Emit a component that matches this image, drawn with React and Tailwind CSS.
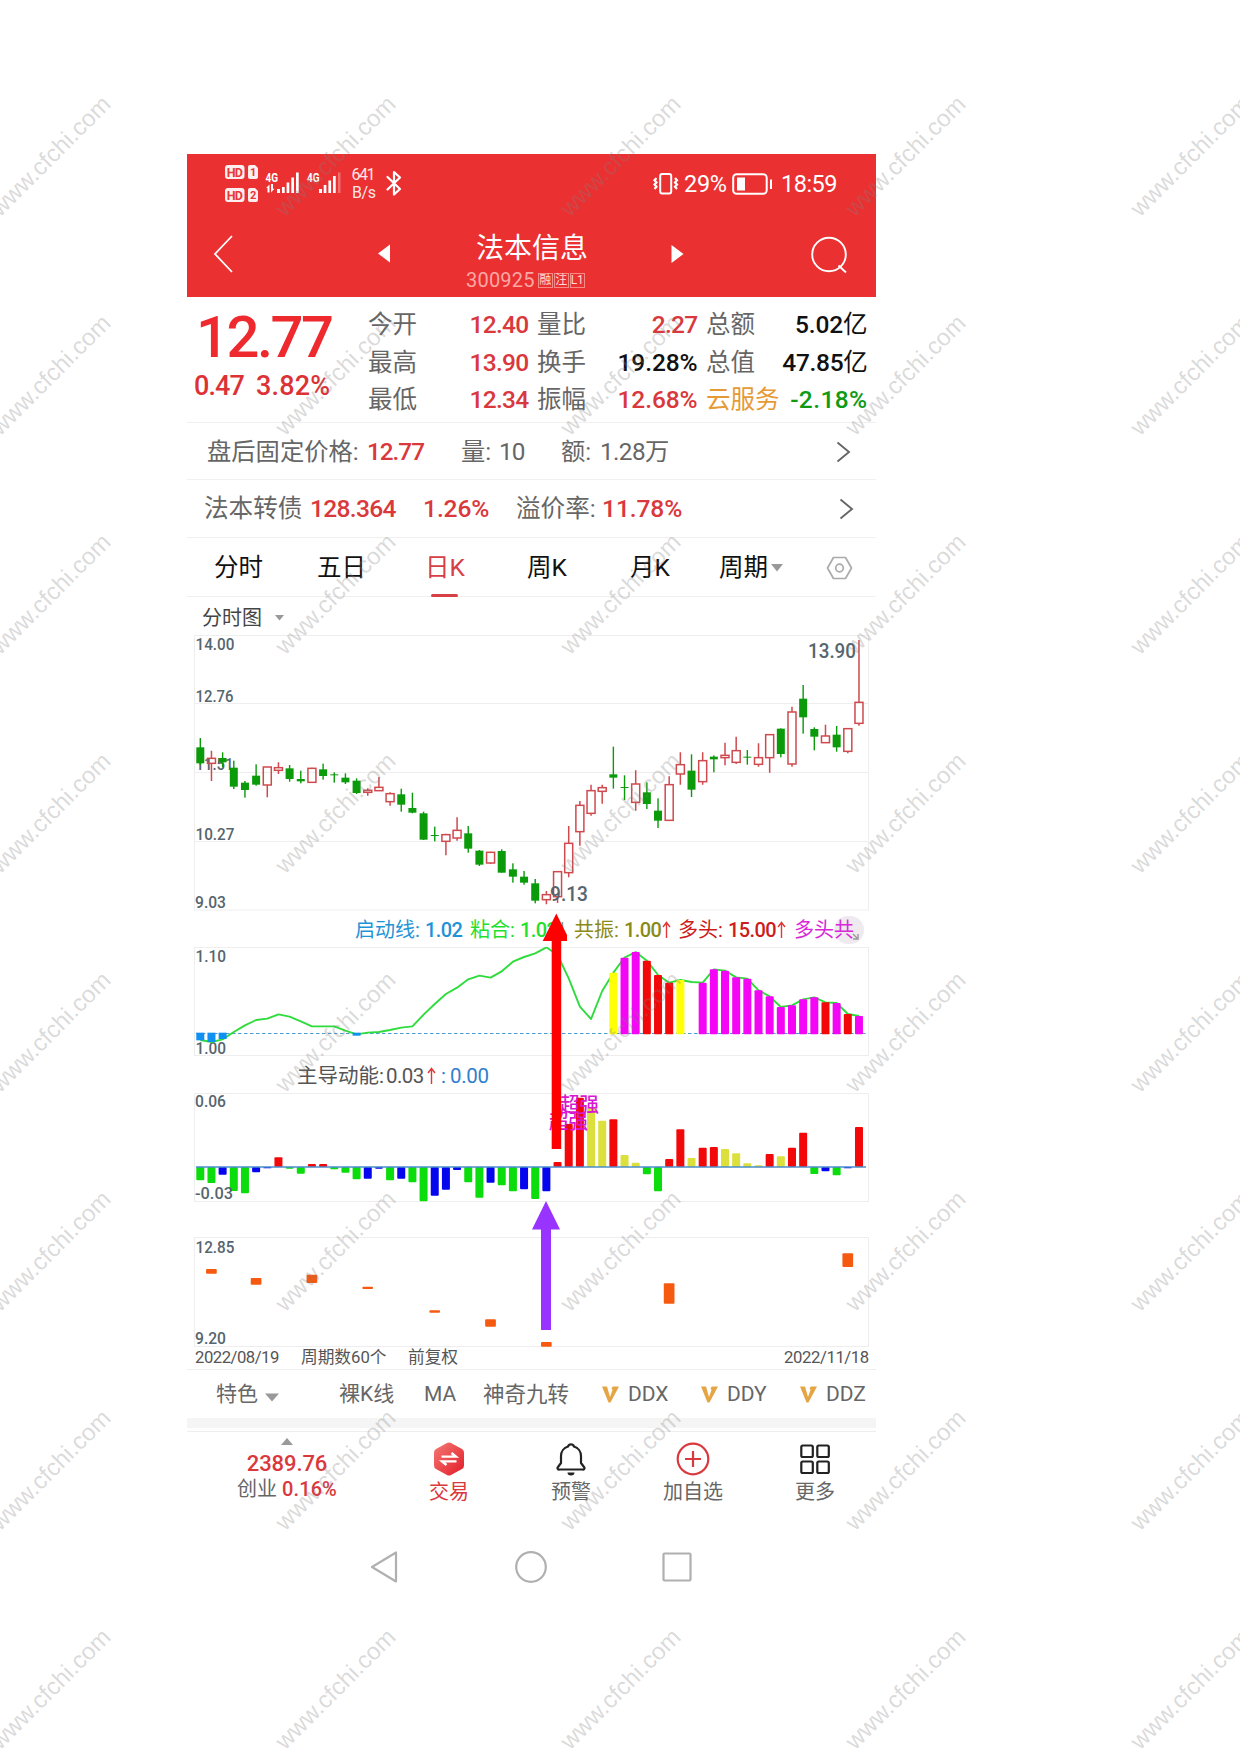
import React from "react";

const G = "#0a9a0a";
const R = "#cf4a4e";

/* [direction, high, body top, body bottom, low] in thirds of a pixel */
const CANDLES = [
  ["g", 624, 652, 700, 705], ["r", 662, 685, 700, 753], ["g", 667, 684, 697, 712], ["g", 692, 713, 770, 777],
  ["g", 753, 758, 780, 803], ["g", 703, 737, 764, 767], ["r", 710, 711, 765, 802], ["r", 697, 713, 721, 732],
  ["g", 705, 715, 747, 755], ["g", 722, 747, 754, 760], ["r", 713, 715, 757, 758], ["g", 701, 718, 738, 749],
  ["g", 727, 733, 736, 758], ["g", 730, 743, 757, 762], ["g", 745, 752, 789, 792], ["r", 775, 781, 787, 797],
  ["r", 741, 772, 782, 782], ["r", 787, 791, 815, 827], ["g", 776, 793, 824, 845], ["g", 788, 834, 848, 850],
  ["g", 845, 850, 929, 930], ["g", 890, 915, 918, 934], ["r", 911, 914, 934, 976], ["r", 862, 901, 924, 932],
  ["g", 888, 910, 956, 968], ["g", 960, 962, 1004, 1008], ["r", 965, 967, 999, 1002], ["g", 958, 963, 1028, 1028],
  ["g", 1000, 1018, 1040, 1058], ["g", 1023, 1040, 1058, 1064], ["g", 1047, 1060, 1112, 1120], ["r", 1083, 1094, 1109, 1123],
  ["r", 1024, 1025, 1100, 1119], ["r", 888, 940, 1028, 1042], ["r", 813, 826, 905, 947], ["r", 764, 782, 850, 857],
  ["r", 764, 773, 784, 821], ["g", 650, 733, 743, 776], ["g", 736, 771, 774, 810], ["r", 721, 762, 817, 842],
  ["g", 757, 787, 822, 837], ["g", 805, 842, 872, 894], ["r", 739, 764, 871, 871], ["r", 667, 704, 732, 764],
  ["g", 673, 722, 779, 801], ["r", 667, 692, 755, 764], ["g", 676, 680, 688, 727], ["r", 638, 676, 683, 706],
  ["r", 620, 662, 697, 702], ["g", 660, 680, 683, 704], ["r", 640, 683, 703, 710], ["r", 612, 614, 683, 728],
  ["g", 595, 596, 672, 682], ["r", 530, 546, 702, 710], ["g", 465, 506, 562, 611], ["g", 592, 597, 620, 661],
  ["r", 584, 618, 638, 638], ["g", 588, 614, 652, 665], ["r", 594, 596, 664, 670], ["r", 330, 517, 580, 587],
];

const LINE = [
  390, 396, 388, 366, 346, 330, 326, 313, 320, 334, 349, 349, 349, 362, 373, 368, 366, 360, 353, 349, 314, 282, 252, 233,
  208, 197, 203, 184, 155, 141, 130, 112, 135, 205, 290, 327, 243, 188, 143, 126, 152, 195, 218, 210, 216, 218, 178, 182,
  202, 206, 241, 259, 291, 286, 268, 262, 277, 279, 312, 318,
];
const LINE_BARS = "YMMRRRY-MMMMMMMMMMMRMRM";

const MOMENTUM = [
  "g811", "g819", "b794", "g843", "g850", "b787", "b775", "r742", "g776", "g791", "r762", "r762", "g778", "g788", "g808",
  "b806", "b776", "g811", "b806", "g817", "g874", "b857", "b839", "b780", "g817", "g863", "b818", "g826", "g844", "b838",
  "g867", "b844", "r756", "r642", "r563", "y592", "y632", "r628", "y735", "y758", "g793", "g844", "r747", "r658", "y744",
  "r713", "r711", "y717", "y730", "y760", "y766", "r732", "y739", "r713", "r668", "g792", "b784", "g796", "b775", "r651",
];

const BLOCKS = [
  [1, 117, 131], [5, 144, 164], [10, 134, 159], [15, 170, 177], [21, 241, 248], [26, 268, 290], [31, 336, 350],
  [42, 160, 221], [58, 70, 111],
];

const FILL = { g: "#0bdc0b", b: "#0505ee", r: "#f20808", y: "#dce03c", M: "#f505f5", R: "#f20808", Y: "#ffff05" };
const cx = (i) => 200.3 + i * 11.164;

function Label({ x, y, w, size = 16.5, fill = "#56656e", children }) {
  return (
    <text x={x} y={y} textLength={w} lengthAdjust="spacingAndGlyphs" fontSize={size} fill={fill} fontWeight="500">
      {children}
    </text>
  );
}

function Frame({ top, bottom, lines = [] }) {
  return (
    <g stroke="#eeeeee" strokeWidth="1" fill="none">
      <rect x="194.5" y={top} width="674" height={bottom - top} />
      {lines.map((y) => (
        <path key={y} d={`M194.5 ${y}H868.5`} />
      ))}
    </g>
  );
}

function PriceChart() {
  return (
    <svg className="block shrink-0" width="689" height="276" viewBox="187 635 689 276">
      <Frame top={635.5} bottom={910} lines={[703.5, 772.5, 841.5]} />
      <Label x="195.500" y="650" w="39">14.00</Label>
      <Label x="195.500" y="702" w="38">12.76</Label>
      <Label x="195.500" y="770" w="38">11.51</Label>
      <Label x="195.500" y="839.5" w="39">10.27</Label>
      <Label x="195" y="908" w="31">9.03</Label>
      <Label x="808" y="658" w="48" size="20">13.90</Label>
      {CANDLES.map(([d, h, t, b, l], i) => {
        const y = (v) => 530 + v / 3;
        const x = cx(i);
        if (d === "g")
          return (
            <g key={i} fill={G}>
              <rect x={x - 0.7} y={y(h)} width="1.4" height={(l - h) / 3} />
              <rect x={x - 4} y={y(t)} width="8" height={(b - t) / 3} />
            </g>
          );
        return (
          <g key={i} stroke={R} strokeWidth="1.5" fill="none">
            <path d={`M${x} ${y(h)}V${y(t)}M${x} ${y(b)}V${y(l)}`} />
            <rect x={x - 4} y={y(t)} width="8" height={Math.max((b - t) / 3, 1)} />
          </g>
        );
      })}
      <Label x="550" y="901" w="38" size="19.500">9.13</Label>
    </svg>
  );
}

function StartLineChart() {
  const y = (v) => 910 + v / 3;
  return (
    <svg className="block shrink-0" width="689" height="109" viewBox="187 947 689 109">
      <Frame top={947.5} bottom={1055.5} />
      <path d="M196 1033.500H866" stroke="#4a9ccc" strokeWidth="1.2" strokeDasharray="3.5 2.500" />
      <Label x="195.500" y="962" w="30.500">1.10</Label>
      <Label x="195.500" y="1054" w="30.500">1.00</Label>
      <polyline
        points={LINE.map((v, i) => `${cx(i)},${y(v)}`).join(" ")}
        fill="none"
        stroke="#2fdc3c"
        strokeWidth="1.9"
        strokeLinejoin="round"
      />
      {[[0, 391], [1, 396], [2, 387], [14, 377]].map(([i, b]) => (
        <rect key={i} x={cx(i) - 4} y={y(368)} width="8" height={(b - 368) / 3} fill="#1090f0" />
      ))}
      {LINE_BARS.split("").map((c, k) =>
        c === "-" ? null : (
          <rect key={k} x={cx(k + 37) - 4} y={y(LINE[k + 37])} width="8" height={(373 - LINE[k + 37]) / 3} rx="1" fill={FILL[c]} />
        )
      )}
    </svg>
  );
}

function MomentumChart() {
  const y = (v) => 910 + v / 3;
  return (
    <svg className="block shrink-0" width="689" height="109" viewBox="187 1093 689 109">
      <Frame top={1093.5} bottom={1201.5} />
      {MOMENTUM.map((s, i) => {
        const v = Number(s.slice(1));
        return (
          <rect key={i} x={cx(i) - 4} y={y(Math.min(v, 771))} width="8" height={Math.abs(v - 771) / 3} rx="1" fill={FILL[s[0]]} />
        );
      })}
      <path d="M196 1167H866" stroke="#4a8ccc" strokeWidth="1.3" />
      <Label x="195" y="1107" w="31">0.06</Label>
      <Label x="195" y="1199" w="38">-0.03</Label>
      <Label x="560" y="1112" w="39" size="20" fill="#d818d0">超强</Label>
      <Label x="549" y="1128.500" w="39" size="20" fill="#d818d0">超强</Label>
    </svg>
  );
}

function BlockChart() {
  return (
    <svg className="block shrink-0" width="689" height="110" viewBox="187 1237 689 110">
      <Frame top={1237.5} bottom={1346.5} />
      <Label x="195.500" y="1252.500" w="39">12.85</Label>
      <Label x="195" y="1344" w="31">9.20</Label>
      {BLOCKS.map(([i, t, b]) => (
        <rect key={i} x={cx(i) - 5.4} y={1230 + t / 3} width="10.700" height={(b - t) / 3} rx="1" fill="#f55a10" />
      ))}
    </svg>
  );
}

function Up({ down }) {
  return (
    <svg className={down ? "rotate-180" : ""} width="9" height="18" viewBox="0 0 9 18" fill="none" stroke={down ? "#7a9a9a" : "#e03838"} strokeWidth="1.4">
      <path d="M4.5 17V2M1 6L4.500 1.500L8 6" />
    </svg>
  );
}

function StatusBar() {
  return (
    <div className="flex h-[60px] items-center pl-[36px] text-white">
      <svg width="206" height="50" viewBox="223 159 206 50" fill="#fff" fontFamily="Roboto" fontWeight="700">
        {[165, 188].map((y, i) => (
          <g key={y}>
            <rect x="225" y={y} width="19.500" height="14" rx="3" fillOpacity=".92" />
            <path d={`M250 ${y}h5l3 3v9a2 2 0 0 1-2 2h-6a2 2 0 0 1-2-2v-10a2 2 0 0 1 2-2z`} fillOpacity=".92" />
            <text x="226.800" y={y + 11.6} fontSize="12.500" textLength="16" fill="#e83838">HD</text>
            <text x="250" y={y + 11.300} fontSize="11" fill="#e83838">{i + 1}</text>
          </g>
        ))}
        <text x="265.500" y="181.500" fontSize="12" textLength="12.500" lengthAdjust="spacingAndGlyphs">4G</text>
        <text x="307" y="181.500" fontSize="12" textLength="12.500" lengthAdjust="spacingAndGlyphs">4G</text>
        <path d="M269.500 192.500v-8l-3.500 3.500h1.500v4.500zM271 184v8.500l3.500-3.800h-1.500V184zM277 189h3v4h-3zM282 187h2.700v6h-2.700zM286.600 182.500h2.700v10.500h-2.700zM291.300 177.500h2.700v15.500h-2.700zM296 172.500h2.700v20.500h-2.700zM319 189h3v4h-3zM323.700 185h2.700v8h-2.700zM328.400 180.500h2.700v12.500h-2.700zM333 176h2.700v17h-2.700z" />
        <path d="M338 172.500h2.500v20.500h-2.500z" fillOpacity=".3" />
        <g fontWeight="400" fontSize="16" fillOpacity=".9">
          <text x="351.500" y="180" textLength="24">641</text>
          <text x="352" y="198" textLength="24">B/s</text>
        </g>
        <path d="M387.500 177l12.500 12l-6 5.500v-22.500l6 5.500l-12.500 12" fill="none" stroke="#fff" strokeWidth="2.200" strokeLinejoin="round" strokeLinecap="round" />
      </svg>
      <svg className="ml-[223px]" width="28" height="24" viewBox="0 0 28 24" fill="none" stroke="#fff" strokeWidth="2">
        <rect x="8.200" y="2" width="11" height="19.500" rx="2" />
        <path d="M4.500 6l-2 2.200l2 2.200l-2 2.200l2 2.200l-2 2.200M23 6l2 2.200l-2 2.200l2 2.200l-2 2.200l2 2.200" strokeWidth="2.200" />
      </svg>
      <span className="ml-[4px] w-[48px] pt-[2px] text-[23.5px] leading-none tracking-[-0.3px]">29%</span>
      <svg width="41" height="22" viewBox="0 0 41 22" fill="none" stroke="#fff" strokeWidth="2">
        <rect x="1.200" y="1.200" width="33.500" height="19.500" rx="3.500" />
        <rect x="5" y="4.500" width="8" height="13" fill="#fff" stroke="none" />
        <path d="M39 6.500v9.500" />
      </svg>
      <span className="ml-[8px] pt-[2px] text-[23.5px] leading-none tracking-[-0.5px]">18:59</span>
    </div>
  );
}

function TitleBar() {
  return (
    <div className="flex h-[83px] text-white">
      <svg className="ml-[25px] mt-[20px]" width="23" height="40" viewBox="0 0 23 40" fill="none" stroke="#fff" strokeWidth="1.800">
        <path d="M20 2L3 20L20 38" />
      </svg>
      <svg className="ml-[143px] mt-[30px]" width="12" height="19" viewBox="0 0 12 19" fill="#fff">
        <path d="M12 0.500V18.500L0 9.500z" />
      </svg>
      <div className="ml-[68px] flex w-[140px] flex-col pt-[20px]">
        <div className="pl-[18px] text-[28px] leading-[30px]">法本信息</div>
        <div className="mt-[6px] flex h-[20px] items-center pl-[8px]">
          <span className="text-[20px] leading-none tracking-[0.2px] text-[#fba8a4]">300925</span>
          <div className="ml-[3px] flex gap-[1px] text-[12px] leading-[13px] text-[#ffd9d6]">
            <span className="h-[15px] w-[15px] border border-[#f58a86] text-center">融</span>
            <span className="h-[15px] w-[15px] border border-[#f58a86] text-center">注</span>
            <span className="h-[15px] w-[15px] border border-[#f58a86] text-center">L1</span>
          </div>
        </div>
      </div>
      <svg className="ml-[73px] mt-[31px]" width="13" height="18" viewBox="0 0 13 18" fill="#fff">
        <path d="M0.500 0V18L12.500 9z" />
      </svg>
      <svg className="ml-[126px] mt-[21px]" width="38" height="39" viewBox="0 0 38 39" fill="none" stroke="#fff" strokeWidth="1.900">
        <circle cx="19" cy="19.500" r="16.800" />
        <path d="M28.500 30.500L36 37.500" />
      </svg>
    </div>
  );
}

const QUOTES = [
  [
    ["今开", "12.40", "text-[#666]", "text-[#d9383c] tracking-[-0.7px]"],
    ["量比", "2.27", "text-[#666]", "text-[#d9383c] tracking-[-0.7px]"],
    ["总额", "5.02亿", "text-[#666]", "text-[#111] tracking-[-0.1px]"],
  ],
  [
    ["最高", "13.90", "text-[#666]", "text-[#d9383c] tracking-[-0.7px]"],
    ["换手", "19.28%", "text-[#666]", "text-[#111] tracking-[-0.1px]"],
    ["总值", "47.85亿", "text-[#666]", "text-[#111] tracking-[-0.3px]"],
  ],
  [
    ["最低", "12.34", "text-[#666]", "text-[#d9383c] tracking-[-0.7px]"],
    ["振幅", "12.68%", "text-[#666]", "text-[#d9383c] tracking-[-0.1px]"],
    ["云服务", "-2.18%", "text-[#e69a35]", "text-[#0f9a14] tracking-[0.4px]"],
  ],
];

function Quote() {
  return (
    <div className="flex h-[126px] border-b border-[#f0f0f0]">
      <div className="w-[181px]">
        <div className="mt-[10px] pl-[9px] text-[58px] font-medium leading-[60px] tracking-[-2.5px] text-[#ee2a2e]">12.77</div>
        <div className="mt-[4px] flex pl-[7px] text-[27px] font-medium leading-[30px] tracking-[-0.9px] text-[#dc3236]">
          <span className="w-[62px]">0.47</span>
          <span className="tracking-[0.2px]">3.82%</span>
        </div>
      </div>
      <div className="flex flex-col pt-[9px] text-[24.5px] leading-[37.5px]">
        {QUOTES.map((row, r) => (
          <div key={r} className="grid h-[37.5px] grid-cols-[160.5px_160.5px_161.5px] gap-[8.5px] whitespace-nowrap">
            {row.map(([name, value, nameStyle, valueStyle]) => (
              <div key={name} className="flex justify-between">
                <span className={nameStyle}>{name}</span>
                <span className={`font-medium ${valueStyle}`}>
                  {value.replace("亿", "")}
                  {value.endsWith("亿") && <span className="font-normal">亿</span>}
                </span>
              </div>
            ))}
          </div>
        ))}
      </div>
    </div>
  );
}

function Chevron() {
  return (
    <svg className="-mt-[2px]" width="15" height="22" viewBox="0 0 15 22" fill="none" stroke="#666" strokeWidth="1.900">
      <path d="M1.500 1.500L13 11L1.500 20.500" />
    </svg>
  );
}

function InfoRows() {
  return (
    <>
      <div className="flex h-[57px] items-center whitespace-nowrap border-b border-[#f0f0f0] pl-[20px] pt-[3px] text-[24.3px] leading-none text-[#666]">
        <span className="w-[160px]">盘后固定价格:</span>
        <span className="w-[94px] font-medium tracking-[-1px] text-[#d9383c]">12.77</span>
        <span className="w-[38px]">量:</span>
        <span className="w-[62px] tracking-[-1px]">10</span>
        <span className="w-[39px]">额:</span>
        <span className="w-[236px] tracking-[-0.6px]">1.28万</span>
        <Chevron />
      </div>
      <div className="flex h-[58px] items-center whitespace-nowrap border-b border-[#f0f0f0] pl-[17px] pt-[2px] text-[24.6px] leading-none text-[#666]">
        <span className="w-[106px]">法本转债</span>
        <span className="w-[113px] font-medium tracking-[-0.7px] text-[#d9383c]">128.364</span>
        <span className="w-[93px] font-medium tracking-[-0.1px] text-[#d9383c]">1.26%</span>
        <span className="w-[86px]">溢价率:</span>
        <span className="w-[237px] font-medium tracking-[-0.1px] text-[#d9383c]">11.78%</span>
        <Chevron />
      </div>
    </>
  );
}

function Tabs() {
  return (
    <div className="flex h-[59px] items-center whitespace-nowrap border-b border-[#f0f0f0] pl-[27px] pt-px text-[24.5px] leading-none text-[#111]">
      <span className="w-[103px] pt-px">分时</span>
      <span className="w-[108px] pt-px">五日</span>
      <div className="flex h-[58px] w-[101px] flex-col text-[#d64044]">
        <span className="flex h-[55px] items-center pt-[4px]">日K</span>
        <span className="ml-[6px] h-[3px] w-[27px] rounded-full bg-[#d64044]" />
      </div>
      <span className="w-[103px] pl-px pt-px">周K</span>
      <span className="w-[90px] pl-px pt-px">月K</span>
      <span className="w-[52px] pt-px">周期</span>
      <svg width="12" height="8" viewBox="0 0 12 8" fill="#999"><path d="M0 0H12L6 7.500z" /></svg>
      <svg className="ml-[43px]" width="27" height="24" viewBox="0 0 27 24" fill="none" stroke="#aaa" strokeWidth="1.700">
        <path d="M7.500 1.500H19.500L25.500 12L19.500 22.500H7.500L1.500 12z" strokeLinejoin="round" />
        <circle cx="13.500" cy="12" r="3.800" />
      </svg>
    </div>
  );
}

function Charts() {
  return (
    <div className="relative flex flex-col">
      <PriceChart />
      <div className="flex h-[36px] items-center whitespace-nowrap pl-[168px] pt-[2px] text-[20px] leading-none">
        <span className="w-[70px] text-[#1f93d6]">启动线:</span>
        <span className="w-[45px] font-medium tracking-[-0.6px] text-[#1f93d6]">1.02</span>
        <span className="w-[50px] text-[#1fe02c]">粘合:</span>
        <span className="w-[38px] font-medium tracking-[-0.6px] text-[#1fe02c]">1.02</span>
        <span className="w-[16px]"><Up down /></span>
        <span className="w-[50px] text-[#8a8a18]">共振:</span>
        <span className="w-[38px] font-medium tracking-[-0.6px] text-[#8a8a18]">1.00</span>
        <span className="w-[16px]"><Up /></span>
        <span className="w-[50px] text-[#cc1c1c]">多头:</span>
        <span className="w-[49px] font-medium tracking-[-0.6px] text-[#cc1c1c]">15.00</span>
        <span className="w-[17px]"><Up /></span>
        <span className="w-[40px] text-[#d828d8]">多头</span>
        <span className="relative flex h-[28px] w-[30px] items-center rounded-full bg-[#eeeaf0] text-[#d828d8]">
          共
          <svg className="absolute bottom-[4px] right-[5px]" width="7" height="7" viewBox="0 0 7 7" fill="none" stroke="#999" strokeWidth="1.4">
            <path d="M1 1L6 6M6 1V6H1" />
          </svg>
        </span>
      </div>
      <StartLineChart />
      <div className="flex h-[37px] items-center whitespace-nowrap pl-[110px] pt-[3px] text-[20.5px] leading-none text-[#555]">
        <span className="w-[89px]">主导动能:</span>
        <span className="w-[41px] tracking-[-0.6px]">0.03</span>
        <span className="w-[14px]"><Up /></span>
        <span className="text-[#2f80cc]">:</span>
        <span className="ml-[4px] tracking-[-0.3px] text-[#2f80cc]">0.00</span>
      </div>
      <MomentumChart />
      <div className="h-[35px]" />
      <BlockChart />
      <svg className="pointer-events-none absolute left-[340px] top-[275px]" width="40" height="425" viewBox="527 910 40 425">
        <path d="M556.300 913.500L570 941H561.200V1149H551.700V941H542.700z" fill="#fe0000" />
        <path d="M546 1201L560 1229.500H551V1330H541V1229.500H532z" fill="#9933ff" />
      </svg>
    </div>
  );
}

function Vip() {
  return (
    <svg className="mr-[9px]" width="17" height="17" viewBox="0 0 17 17">
      <path d="M0 0.500H5L8 11L10.500 4L9.500 2L11 0.500H17L8.500 16.500H6.500z" fill="#e5a545" />
    </svg>
  );
}

function Features() {
  return (
    <>
      <div className="flex h-[23px] items-center whitespace-nowrap border-b border-[#eee] pl-[8px] text-[16.7px] leading-none text-[#555]">
        <span className="w-[106px] tracking-[-0.5px]">2022/08/19</span>
        <span className="w-[107px]">周期数60个</span>
        <span className="w-[376px]">前复权</span>
        <span className="tracking-[-0.4px]">2022/11/18</span>
      </div>
      <div className="flex h-[49px] items-center whitespace-nowrap pl-[29px] text-[21px] leading-none text-[#666]">
        <span className="w-[49px]">特色</span>
        <svg className="mt-[5px]" width="14" height="9" viewBox="0 0 14 9" fill="#999"><path d="M0 0.500H14L7 8.500z" /></svg>
        <span className="ml-[60px] w-[85px]">裸K线</span>
        <span className="w-[59px]">MA</span>
        <span className="w-[119px] text-[21.500px]">神奇九转</span>
        <span className="flex w-[99px] items-center"><Vip />DDX</span>
        <span className="flex w-[99px] items-center"><Vip />DDY</span>
        <span className="flex items-center"><Vip />DDZ</span>
      </div>
      <div className="-mt-px h-[10px] bg-[#f5f5f5]" />
      <div className="h-[4px] border-b border-[#eee]" />
    </>
  );
}

function BottomBar() {
  return (
    <div className="flex h-[88px] pt-px text-[20px] leading-none text-[#666]">
      <div className="ml-[50px] flex w-[100px] flex-col items-center pt-[5px]">
        <svg width="12" height="7" viewBox="0 0 12 7" fill="#999"><path d="M0 7H12L6 0z" /></svg>
        <span className="mt-[8px] text-[22px] font-medium tracking-[-0.1px] text-[#d9383c]">2389.76</span>
        <span className="mt-[4px] flex whitespace-nowrap">
          创业<span className="ml-[5px] font-medium tracking-[0.1px] text-[#d9383c]">0.16%</span>
        </span>
      </div>
      <div className="ml-[81px] flex w-[62px] flex-col items-center pt-[9px]">
        <svg width="32" height="34" viewBox="0 0 32 34">
          <defs>
            <linearGradient id="hex" x1="0" y1="0" x2="1" y2="1">
              <stop offset="0" stopColor="#f47a74" />
              <stop offset="1" stopColor="#e21c28" />
            </linearGradient>
          </defs>
          <path d="M14 1a4 4 0 0 1 4 0l11 6a4 4 0 0 1 2 3.500v13a4 4 0 0 1-2 3.500l-11 6a4 4 0 0 1-4 0l-11-6a4 4 0 0 1-2-3.500v-13a4 4 0 0 1 2-3.500z" fill="url(#hex)" />
          <path d="M8.500 14.700H23L18.500 11M23.500 19.300H9L13.500 23" fill="none" stroke="#fff" strokeWidth="2.300" />
        </svg>
        <span className="mt-[6px] text-[#d9383c]">交易</span>
      </div>
      <div className="ml-[60px] flex w-[62px] flex-col items-center pt-[9px]">
        <svg width="30" height="34" viewBox="0 0 30 34" fill="none" stroke="#222" strokeWidth="2.200">
          <path d="M12 4.500a3.200 3.200 0 0 1 6 0a10 10 0 0 1 7 9.500v7l3 4a1.500 1.500 0 0 1-1.500 2.500h-23a1.500 1.500 0 0 1-1.500-2.500l3-4v-7a10 10 0 0 1 7-9.500z" strokeLinejoin="round" />
          <path d="M11.500 30.500h7a3.500 3 0 0 1-7 0z" fill="#222" stroke="none" />
        </svg>
        <span className="mt-[6px]">预警</span>
      </div>
      <div className="ml-[60px] flex w-[62px] flex-col items-center pt-[9px]">
        <svg width="34" height="34" viewBox="0 0 34 34" fill="none" stroke="#d9383c" strokeWidth="2.200">
          <circle cx="17" cy="17" r="15.300" />
          <path d="M17 9V25M9 17H25" />
        </svg>
        <span className="mt-[6px] whitespace-nowrap">加自选</span>
      </div>
      <div className="ml-[60px] flex w-[62px] flex-col items-center pt-[9px]">
        <svg width="32" height="34" viewBox="0 0 32 34" fill="none" stroke="#222" strokeWidth="2.200">
          <rect x="2.300" y="3.500" width="11.500" height="11.500" rx="1.500" />
          <rect x="18.300" y="3.500" width="11.500" height="11.500" rx="1.500" />
          <rect x="2.300" y="19.500" width="11.500" height="11.500" rx="1.500" />
          <rect x="18.300" y="19.500" width="11.500" height="11.500" rx="1.500" />
        </svg>
        <span className="mt-[6px]">更多</span>
      </div>
    </div>
  );
}

function SystemNav() {
  return (
    <div className="flex h-[93px] items-center pl-[182px]">
      <svg width="30" height="34" viewBox="0 0 30 34" fill="none" stroke="#b0b0b0" strokeWidth="2.200" strokeLinejoin="round">
        <path d="M27 2.500V31.500L3 17z" />
      </svg>
      <svg className="ml-[115px]" width="34" height="34" viewBox="0 0 34 34" fill="none" stroke="#b0b0b0" strokeWidth="2.200">
        <circle cx="17" cy="17" r="14.800" />
      </svg>
      <svg className="ml-[114px]" width="30" height="30" viewBox="0 0 30 30" fill="none" stroke="#b0b0b0" strokeWidth="2.200">
        <rect x="1.500" y="1.500" width="27" height="27" rx="1" />
      </svg>
    </div>
  );
}

function Watermarks() {
  return (
    <div className="pointer-events-none absolute inset-0 overflow-hidden">
      <div className="-ml-[92px] mt-[46px] grid w-[1425px] grid-cols-[repeat(5,285px)] auto-rows-[219px] font-['Liberation_Sans',Arial,sans-serif]">
        {Array.from({ length: 40 }, (_, i) => (
          <div key={i} className="flex items-center justify-center">
            <span className="-rotate-45 text-[24px] leading-none text-[#808080]/30">www.cfchi.com</span>
          </div>
        ))}
      </div>
    </div>
  );
}

export default function App() {
  return (
    <div className="relative h-[1754px] w-[1240px] overflow-hidden bg-white pl-[187px] pt-[154px] font-['Roboto','Noto_Sans_CJK_SC',sans-serif]">
      <div className="flex w-[689px] flex-col">
        <div className="bg-[#eb3032]">
          <StatusBar />
          <TitleBar />
        </div>
        <Quote />
        <InfoRows />
        <Tabs />
        <div className="flex h-[38px] items-center pl-[15px] pt-[3px] text-[20px] leading-none text-[#444]">
          分时图
          <svg className="ml-[13px]" width="9" height="6" viewBox="0 0 9 6" fill="#999"><path d="M0 0H9L4.500 5.500z" /></svg>
        </div>
        <Charts />
        <Features />
        <BottomBar />
        <SystemNav />
      </div>
      <Watermarks />
    </div>
  );
}
